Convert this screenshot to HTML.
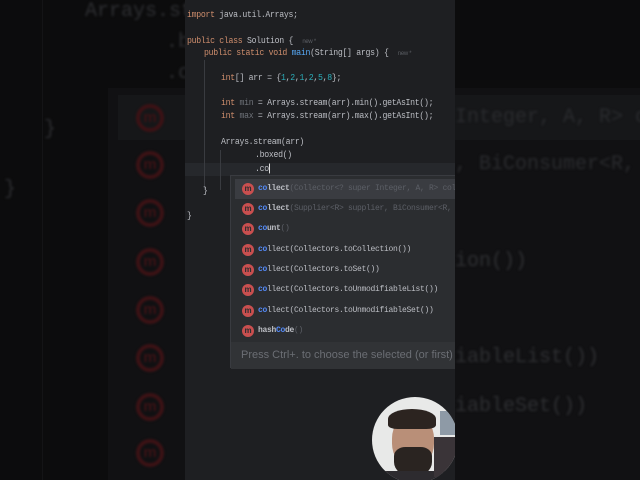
<!DOCTYPE html>
<html><head><meta charset="utf-8"><style>
*{margin:0;padding:0;box-sizing:border-box}
html,body{width:640px;height:480px;overflow:hidden}
body{background:#0c0c0d;position:relative;font-family:"Liberation Mono",monospace}
.a{position:absolute;white-space:pre}
.bg{color:#2e2f32;font-size:20px;filter:blur(1.3px)}
.bi{position:absolute;width:28px;height:28px;border-radius:50%;border:4px solid #3c1215;color:#3c1215;font:bold 15px "Liberation Sans",sans-serif;text-align:center;line-height:20px;filter:blur(1px)}
#p{position:absolute;left:185px;top:0;width:270px;height:480px;background:#1e1f22;overflow:hidden}
.c{position:absolute;font-size:8.2px;color:#bcbec4;white-space:pre;letter-spacing:-.3px;transform:scaleY(1.1)}
.k{color:#cf8e6d}.f{color:#56a8f5}.n{color:#2aacb8}.g{color:#6f737a}.h{color:#5a5d63;font-family:"Liberation Sans",sans-serif;font-size:6px}
#pop{position:absolute;left:45px;top:175px;width:240px;height:193px;background:#2b2d30;border:1px solid #393b40}
.it{position:absolute;left:0;width:240px;height:20px}
.ic{position:absolute;left:11px;top:4px;width:12px;height:12px;border-radius:50%;background:#c94f4f;color:#2b2d30;font:bold 8px "Liberation Sans",sans-serif;text-align:center;line-height:12px}
.t{position:absolute;left:27px;top:5px;font-size:8px;color:#bcbec4;white-space:pre;letter-spacing:-.3px}
.t u{text-decoration:none;font-weight:bold}
.t b{color:#548af7}.t i{font-style:normal;font-weight:normal;color:#5c5f66}
</style></head><body>
<div class="a" style="left:108px;top:88px;width:532px;height:392px;background:#111113"></div>
<div class="a" style="left:118px;top:95px;width:522px;height:45px;background:#161719"></div>
<div class="a" style="left:42px;top:0;width:1px;height:480px;background:#141416"></div>
<div class="a bg" style="left:85px;top:0">Arrays.str</div>
<div class="a bg" style="left:166px;top:31px">.b</div>
<div class="a bg" style="left:166px;top:62px">.c</div>
<div class="a bg" style="left:44px;top:118px">}</div>
<div class="a bg" style="left:4px;top:178px">}</div>
<div class="bi" style="left:136px;top:104px">m</div>
<div class="bi" style="left:136px;top:151px">m</div>
<div class="bi" style="left:136px;top:199px">m</div>
<div class="bi" style="left:136px;top:248px">m</div>
<div class="bi" style="left:136px;top:296px">m</div>
<div class="bi" style="left:136px;top:344px">m</div>
<div class="bi" style="left:136px;top:393px">m</div>
<div class="bi" style="left:136px;top:439px">m</div>
<div class="a" style="left:455px;top:0;width:185px;height:480px;overflow:hidden">
<div class="a bg" style="left:0;top:106px;color:#2a2b2e">Integer, A, R&gt; collec</div>
<div class="a bg" style="left:0;top:153px;color:#2a2b2e">, BiConsumer&lt;R, ? c</div>
<div class="a bg" style="left:0;top:250px">ion())</div>
<div class="a bg" style="left:0;top:346px">iableList())</div>
<div class="a bg" style="left:0;top:395px">iableSet())</div>
</div>

<div id="p">
<div class="a" style="left:0;top:163px;width:270px;height:13px;background:#26282c"></div>
<div class="a" style="left:19px;top:60px;width:1px;height:130px;background:#393b40"></div>
<div class="a" style="left:35px;top:150px;width:1px;height:40px;background:#393b40"></div>
<div class="c" style="left:2px;top:11px"><span class="k">import</span> java.util.Arrays;</div>
<div class="c" style="left:2px;top:37px"><span class="k">public class</span> Solution {  <span class="h">new *</span></div>
<div class="c" style="left:19px;top:49px"><span class="k">public static void</span> <span class="f">main</span>(String[] args) {  <span class="h">new *</span></div>
<div class="c" style="left:36px;top:74px"><span class="k">int</span>[] arr = {<span class="n">1</span>,<span class="n">2</span>,<span class="n">1</span>,<span class="n">2</span>,<span class="n">5</span>,<span class="n">8</span>};</div>
<div class="c" style="left:36px;top:99px"><span class="k">int</span> <span class="g">min</span> = Arrays.stream(arr).min().getAsInt();</div>
<div class="c" style="left:36px;top:112px"><span class="k">int</span> <span class="g">max</span> = Arrays.stream(arr).max().getAsInt();</div>
<div class="c" style="left:36px;top:138px">Arrays.stream(arr)</div>
<div class="c" style="left:70px;top:151px">.boxed()</div>
<div class="c" style="left:70px;top:164px">.co<span style="display:inline-block;width:1px;height:9px;background:#ddd;vertical-align:middle"></span></div>
<div class="c" style="left:18px;top:187px">}</div>
<div class="c" style="left:2px;top:212px">}</div>
<div id="pop">
<div class="it" style="top:3px;background:#3a3c41;left:4px;width:236px"><div class="ic" style="left:7px">m</div><div class="t" style="left:23px"><u><b>co</b>llect</u><i>(Collector&lt;? super Integer, A, R&gt; colle</i></div></div>
<div class="it" style="top:23px"><div class="ic">m</div><div class="t"><u><b>co</b>llect</u><i>(Supplier&lt;R&gt; supplier, BiConsumer&lt;R, ? </i></div></div>
<div class="it" style="top:43px"><div class="ic">m</div><div class="t"><u><b>co</b>unt</u><i>()</i></div></div>
<div class="it" style="top:64px"><div class="ic">m</div><div class="t"><b>co</b>llect(Collectors.toCollection())</div></div>
<div class="it" style="top:84px"><div class="ic">m</div><div class="t"><b>co</b>llect(Collectors.toSet())</div></div>
<div class="it" style="top:104px"><div class="ic">m</div><div class="t"><b>co</b>llect(Collectors.toUnmodifiableList())</div></div>
<div class="it" style="top:125px"><div class="ic">m</div><div class="t"><b>co</b>llect(Collectors.toUnmodifiableSet())</div></div>
<div class="it" style="top:145px"><div class="ic">m</div><div class="t"><u>hash<b>Co</b>de</u><i>()</i></div></div>
<div style="position:absolute;left:0;top:166px;width:240px;height:27px;background:#313336;color:#6b6e74;font:11px 'Liberation Sans',sans-serif;line-height:26px;padding-left:10px;white-space:nowrap;overflow:hidden">Press Ctrl+. to choose the selected (or first) su</div>
</div>
<div style="position:absolute;left:187px;top:397px;width:86px;height:86px;border-radius:50%;background:#e8e9e8;overflow:hidden">
<div style="position:absolute;left:20px;top:18px;width:42px;height:52px;border-radius:45%;background:#b98f78"></div>
<div style="position:absolute;left:16px;top:12px;width:48px;height:20px;border-radius:50% 50% 20% 20%;background:#2c2420"></div>
<div style="position:absolute;left:22px;top:50px;width:38px;height:30px;border-radius:30% 30% 50% 50%;background:#2a2421"></div>
<div style="position:absolute;left:10px;top:74px;width:66px;height:20px;background:#2d2b2f"></div>
<div style="position:absolute;left:62px;top:40px;width:24px;height:40px;background:#3a3438"></div>
<div style="position:absolute;left:68px;top:14px;width:18px;height:24px;background:#8e9aa6"></div>
</div>
</div>
</body></html>
